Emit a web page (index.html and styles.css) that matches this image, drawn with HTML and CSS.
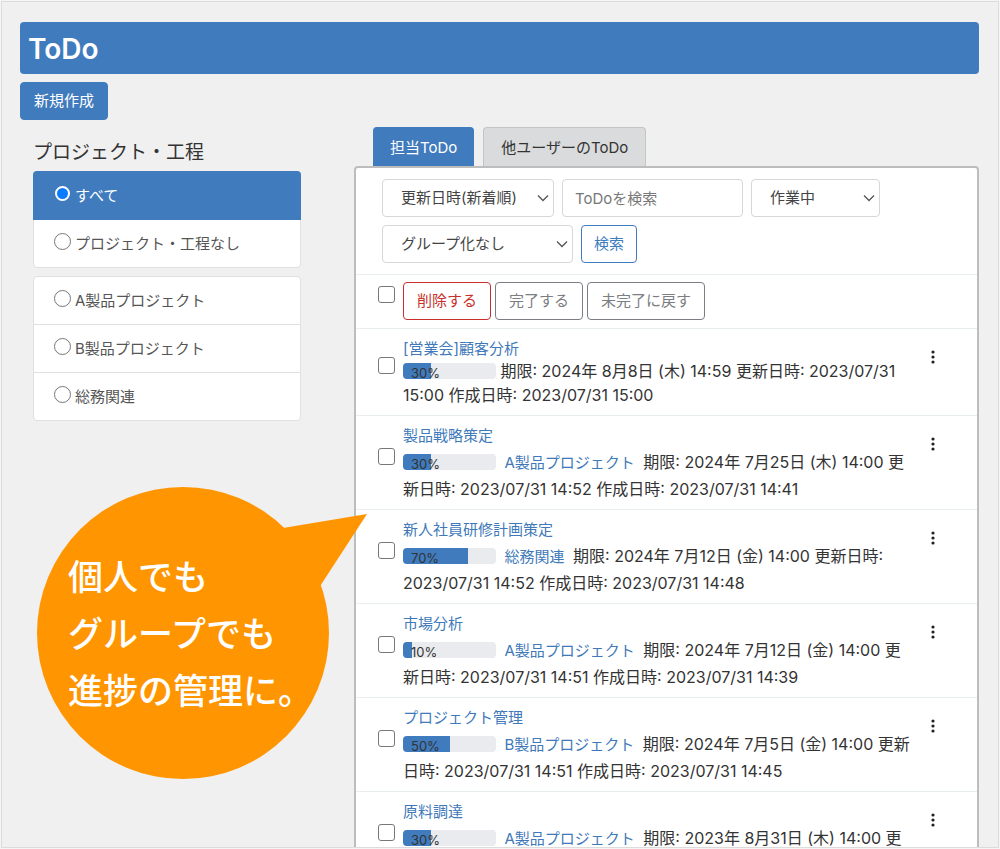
FILE: index.html
```html
<!DOCTYPE html>
<html lang="ja">
<head>
  <meta charset="UTF-8">
  <meta name="viewport" content="width=device-width, initial-scale=1.0">
  <title>ToDo</title>
  <link rel="stylesheet" href="styles.css">
</head>
<body>

  <div class="page">
    <header class="page-header">
      <h1>ToDo</h1>
    </header>
    <button class="btn btn-primary" type="button">新規作成</button>

    <div class="columns">
      <aside class="sidebar">
        <h2>プロジェクト・工程</h2>
        <div class="list-group">
          <label class="list-item active"><input type="radio" name="project" checked> すべて</label>
          <label class="list-item"><input type="radio" name="project"> プロジェクト・工程なし</label>
        </div>
        <div class="list-group">
          <label class="list-item"><input type="radio" name="project"> A製品プロジェクト</label>
          <label class="list-item"><input type="radio" name="project"> B製品プロジェクト</label>
          <label class="list-item"><input type="radio" name="project"> 総務関連</label>
        </div>

        <div class="bubble">
          <svg class="bubble-shape" viewBox="0 0 330 292" aria-hidden="true">
            <circle cx="146" cy="146" r="146"/>
            <path d="M240 42 L330 27 L276 110 Z"/>
          </svg>
          <p>個人でも<br>グループでも<br>進捗の管理に。</p>
        </div>
      </aside>

      <main class="content">
        <nav class="tabs">
          <a class="tab active" href="#">担当ToDo</a>
          <a class="tab" href="#">他ユーザーのToDo</a>
        </nav>

        <div class="panel">
          <form class="filters">
            <select class="sort" aria-label="並び順">
              <option>更新日時(新着順)</option>
            </select>
            <input class="keyword" type="text" placeholder="ToDoを検索" aria-label="ToDoを検索">
            <select class="status" aria-label="状態">
              <option>作業中</option>
            </select>
            <select class="group" aria-label="グループ化">
              <option>グループ化なし</option>
            </select>
            <button class="btn btn-outline-primary" type="button">検索</button>
          </form>

          <div class="bulk">
            <input type="checkbox" aria-label="すべて選択">
            <button class="btn btn-danger" type="button">削除する</button>
            <button class="btn btn-gray" type="button">完了する</button>
            <button class="btn btn-gray" type="button">未完了に戻す</button>
          </div>

          <ul class="todo-list">
            <li class="todo no-project">
              <input type="checkbox" aria-label="[営業会]顧客分析">
              <div class="todo-body">
                <a class="todo-title" href="#">[営業会]顧客分析</a>
                <p class="meta">
                  <span class="progress"><span class="bar" style="width: 30%"></span><span class="percent">30%</span></span>
                  期限: 2024年 8月8日 (木) 14:59 更新日時: 2023/07/31 15:00 作成日時: 2023/07/31 15:00
                </p>
              </div>
              <button class="menu" type="button" aria-label="メニュー"><svg viewBox="0 0 4 14"><circle cx="2" cy="2" r="1.6"/><circle cx="2" cy="7" r="1.6"/><circle cx="2" cy="12" r="1.6"/></svg></button>
            </li>
            <li class="todo">
              <input type="checkbox" aria-label="製品戦略策定">
              <div class="todo-body">
                <a class="todo-title" href="#">製品戦略策定</a>
                <p class="meta">
                  <span class="progress"><span class="bar" style="width: 30%"></span><span class="percent">30%</span></span>
                  <a class="project" href="#">A製品プロジェクト</a>
                  期限: 2024年 7月25日 (木) 14:00 更新日時: 2023/07/31 14:52 作成日時: 2023/07/31 14:41
                </p>
              </div>
              <button class="menu" type="button" aria-label="メニュー"><svg viewBox="0 0 4 14"><circle cx="2" cy="2" r="1.6"/><circle cx="2" cy="7" r="1.6"/><circle cx="2" cy="12" r="1.6"/></svg></button>
            </li>
            <li class="todo">
              <input type="checkbox" aria-label="新人社員研修計画策定">
              <div class="todo-body">
                <a class="todo-title" href="#">新人社員研修計画策定</a>
                <p class="meta">
                  <span class="progress"><span class="bar" style="width: 70%"></span><span class="percent">70%</span></span>
                  <a class="project" href="#">総務関連</a>
                  期限: 2024年 7月12日 (金) 14:00 更新日時: 2023/07/31 14:52 作成日時: 2023/07/31 14:48
                </p>
              </div>
              <button class="menu" type="button" aria-label="メニュー"><svg viewBox="0 0 4 14"><circle cx="2" cy="2" r="1.6"/><circle cx="2" cy="7" r="1.6"/><circle cx="2" cy="12" r="1.6"/></svg></button>
            </li>
            <li class="todo">
              <input type="checkbox" aria-label="市場分析">
              <div class="todo-body">
                <a class="todo-title" href="#">市場分析</a>
                <p class="meta">
                  <span class="progress"><span class="bar" style="width: 10%"></span><span class="percent">10%</span></span>
                  <a class="project" href="#">A製品プロジェクト</a>
                  期限: 2024年 7月12日 (金) 14:00 更新日時: 2023/07/31 14:51 作成日時: 2023/07/31 14:39
                </p>
              </div>
              <button class="menu" type="button" aria-label="メニュー"><svg viewBox="0 0 4 14"><circle cx="2" cy="2" r="1.6"/><circle cx="2" cy="7" r="1.6"/><circle cx="2" cy="12" r="1.6"/></svg></button>
            </li>
            <li class="todo">
              <input type="checkbox" aria-label="プロジェクト管理">
              <div class="todo-body">
                <a class="todo-title" href="#">プロジェクト管理</a>
                <p class="meta">
                  <span class="progress"><span class="bar" style="width: 50%"></span><span class="percent">50%</span></span>
                  <a class="project" href="#">B製品プロジェクト</a>
                  期限: 2024年 7月5日 (金) 14:00 更新日時: 2023/07/31 14:51 作成日時: 2023/07/31 14:45
                </p>
              </div>
              <button class="menu" type="button" aria-label="メニュー"><svg viewBox="0 0 4 14"><circle cx="2" cy="2" r="1.6"/><circle cx="2" cy="7" r="1.6"/><circle cx="2" cy="12" r="1.6"/></svg></button>
            </li>
            <li class="todo">
              <input type="checkbox" aria-label="原料調達">
              <div class="todo-body">
                <a class="todo-title" href="#">原料調達</a>
                <p class="meta">
                  <span class="progress"><span class="bar" style="width: 30%"></span><span class="percent">30%</span></span>
                  <a class="project" href="#">A製品プロジェクト</a>
                  期限: 2023年 8月31日 (木) 14:00 更
                </p>
              </div>
              <button class="menu" type="button" aria-label="メニュー"><svg viewBox="0 0 4 14"><circle cx="2" cy="2" r="1.6"/><circle cx="2" cy="7" r="1.6"/><circle cx="2" cy="12" r="1.6"/></svg></button>
            </li>
          </ul>
        </div>
      </main>
    </div>
  </div>

</body>
</html>
```
FILE: styles.css
```css
* {
  box-sizing: border-box;
}
body {
  margin: 0;
  padding: 1px;
  background-color: #f5f5f5;
  color: #333;
  font-family: Inter, "Noto Sans CJK JP", sans-serif;
  font-size: 15px;
  line-height: 24px;
}
h1, h2, p, ul {
  margin: 0;
  padding: 0;
}
a {
  color: #4079b9;
  text-decoration: none;
}
button, input, select {
  margin: 0;
  font: inherit;
}
.page {
  height: calc(100vh - 2px);
  padding: 20px 19px 0 18px;
  overflow: hidden;
  background-color: #f0f0f0;
  border: 1px solid #dcdcdc;
}
.page-header {
  margin-bottom: 8px;
  padding: 7px 8px 5px;
  background-color: #407bbd;
  border-radius: 4px;
}
.page-header h1 {
  color: #fff;
  font-size: 28px;
  font-weight: 600;
  line-height: 40px;
}

/* ボタン */
.btn {
  height: 38px;
  padding: 0 13px;
  background-color: #fff;
  border: 1px solid;
  border-radius: 4px;
  white-space: nowrap;
  cursor: pointer;
}
.btn-primary {
  background-color: #407bbd;
  border-color: #407bbd;
  color: #fff;
}
.btn-outline-primary {
  padding: 0 12px;
  border-color: #407bbd;
  color: #407bbd;
}
.btn-danger {
  border-color: #c9302c;
  color: #c9302c;
}
.btn-gray {
  border-color: #7b7e82;
  color: #7b7e82;
}

.columns {
  display: flex;
  align-items: flex-start;
  gap: 53px;
  padding-left: 13px;
  margin-top: 7px;
}

/* 左側のプロジェクト一覧 */
.sidebar {
  flex: 0 0 268px;
  position: relative;
  padding-top: 14px;
}
.sidebar h2 {
  margin-bottom: 6px;
  font-size: 19px;
  font-weight: 400;
}
.list-group {
  margin-bottom: 8px;
  background-color: #fff;
  border: 1px solid #e0e0e0;
  border-radius: 4px;
}
.list-item {
  display: flex;
  align-items: center;
  gap: 4px;
  height: 48px;
  padding-left: 20px;
  border-bottom: 1px solid #e0e0e0;
  color: #555;
}
.list-item:last-child {
  height: 47px;
  border-bottom: none;
}
.list-item.active {
  height: 49px;
  margin: -1px -1px 0;
  padding-left: 21px;
  background-color: #407bbd;
  border: none;
  border-radius: 4px 4px 0 0;
  color: #fff;
}
.list-item input {
  appearance: none;
  width: 17px;
  height: 17px;
  margin-bottom: 4px;
  background-color: #fff;
  border: 1px solid #777;
  border-radius: 50%;
}
.list-item input:checked {
  width: 15px;
  height: 15px;
  margin-left: 1px;
  margin-right: 1px;
  background-color: #0a7aff;
  border: 2px solid #fff;
}

/* 吹き出し */
.bubble {
  position: absolute;
  top: 360px;
  left: 4px;
  width: 330px;
  padding: 62px 0 0 31px;
}
.bubble-shape {
  position: absolute;
  top: 0;
  left: 0;
  width: 330px;
  height: 292px;
  fill: #ff9500;
}
.bubble p {
  position: relative;
  color: #fff;
  font-size: 35px;
  font-weight: 500;
  line-height: 57px;
}

/* ToDo一覧 */
.content {
  flex: 1;
  min-width: 0;
}
.tabs {
  display: flex;
  gap: 9px;
  padding-left: 19px;
}
.tab {
  height: 39px;
  padding: 8px 17px;
  background-color: #dadbdc;
  border: 1px solid #c4c4c4;
  border-bottom: none;
  border-radius: 4px 4px 0 0;
  color: #333;
}
.tab.active {
  padding: 8px 16px;
  background-color: #407bbd;
  border-color: #407bbd;
  color: #fff;
}
.panel {
  background-color: #fff;
  border: 2px solid #bdbdbd;
  border-radius: 4px;
}
.filters {
  display: flex;
  flex-wrap: wrap;
  gap: 8px;
  padding: 11px 26px;
}
.filters select, .keyword {
  height: 38px;
  background-color: #fff;
  border: 1px solid #d5d7da;
  border-radius: 4px;
  color: #444;
}
.filters select {
  appearance: none;
  padding: 0 18px;
  background-image: url("data:image/svg+xml,%3Csvg xmlns='http://www.w3.org/2000/svg' viewBox='0 0 12 8'%3E%3Cpath d='M1 1.5 6 6.5 11 1.5' fill='none' stroke='%23555' stroke-width='1.3'/%3E%3C/svg%3E");
  background-repeat: no-repeat;
  background-position: right 4px center;
  background-size: 12px 8px;
}
.keyword {
  width: 181px;
  padding: 0 12px;
}
.keyword::placeholder {
  color: #777;
}
.sort {
  width: 172px;
}
.status {
  width: 129px;
}
.group {
  width: 191px;
}
input[type="checkbox"] {
  appearance: none;
  flex: none;
  width: 17px;
  height: 17px;
  background-color: #fff;
  border: 1px solid #777;
  border-radius: 3px;
}
.bulk {
  display: flex;
  gap: 4px;
  padding: 7px 22px 8px;
  border-top: 1px solid #e9eff0;
}
.bulk input {
  margin: 4px 4px 0 0;
}
.todo-list {
  list-style: none;
}
.todo {
  display: flex;
  align-items: flex-start;
  padding: 8px 34px 6px 22px;
  border-top: 1px solid #e9eff0;
}
.todo input {
  margin: 24px 8px 0 0;
}
.todo-body {
  flex: 1;
  min-width: 0;
}
.todo-title {
  display: block;
}
.meta {
  margin-top: 1px;
  font-size: 16px;
  line-height: 27px;
}
.no-project .meta {
  margin: -2px 0 2px;
  line-height: 24px;
}
.no-project input {
  margin-top: 20px;
}
.progress {
  display: inline-block;
  position: relative;
  width: 93px;
  height: 16px;
  background-color: #e9ebee;
  border-radius: 4px;
  vertical-align: -2px;
}
.bar {
  display: block;
  height: 100%;
  background-color: #407bbd;
  border-radius: 4px 0 0 4px;
}
.percent {
  position: absolute;
  top: 2px;
  left: 8px;
  font-size: 13px;
  line-height: 16px;
}
.project {
  margin: 0 4px;
  font-size: 15px;
}
.menu {
  display: flex;
  width: 20px;
  height: 24px;
  margin: 8px 0 0 10px;
  padding: 5px 8px;
  background: none;
  border: none;
  cursor: pointer;
}
.menu svg {
  width: 4px;
  height: 14px;
  fill: #222;
}
```
